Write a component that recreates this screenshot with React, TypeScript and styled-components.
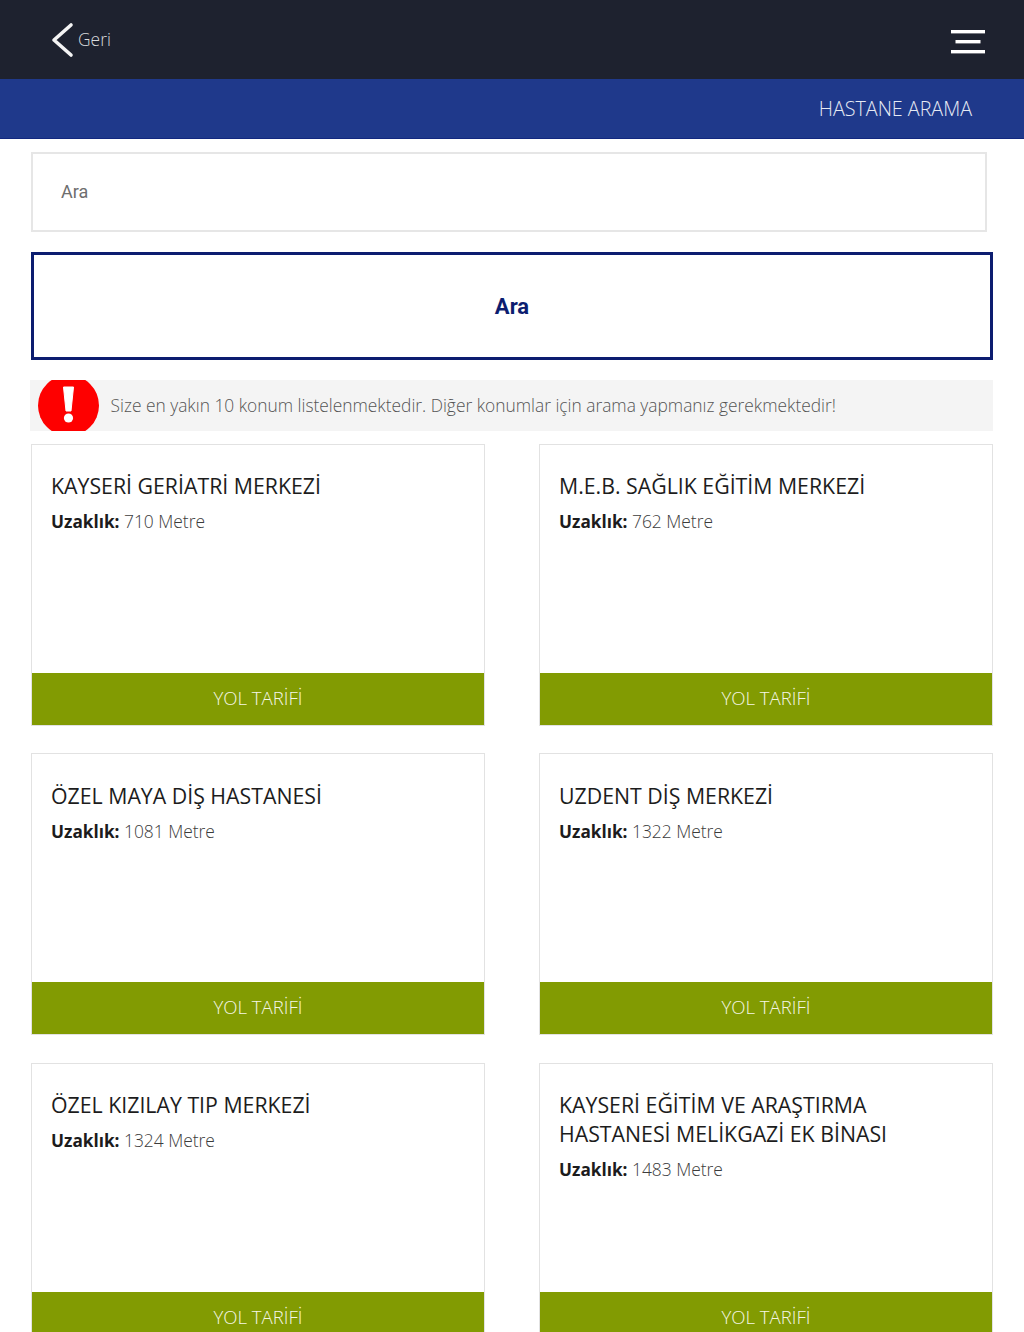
import { FC } from 'react'
import styled, { createGlobalStyle } from 'styled-components'

const Global = createGlobalStyle`
html, body { margin: 0; padding: 0; background: #fff; height: 1332px; overflow: hidden; }
* { box-sizing: border-box; }
body { font-family: 'Open Sans', sans-serif; }
`

const TopBar = styled.header`
  height: 79px;
  background: #1e222f;
  display: flex;
  align-items: center;
  justify-content: space-between;
  padding: 0 39px 0 50px;
`
const BackLink = styled.a`
  display: flex;
  align-items: center;
  gap: 4px;
  color: #d8dadd;
  font-size: 17.4px;
  font-weight: 300;
  padding-bottom: 2px;
  svg { display: block; margin-top: 3px; }
`
const TitleBar = styled.div`
  height: 60px;
  background: #1f398b;
  border-bottom: 1px solid #12287f;
  display: flex;
  align-items: center;
  justify-content: flex-end;
  padding: 0 52px 1px 0;
  color: #e6eaf4;
  font-size: 19.7px;
  font-weight: 300;
`
const Content = styled.main`
  padding: 13px 31px 0;
`
const SearchInput = styled.input`
  display: block;
  width: 956px;
  height: 80px;
  border: 2px solid #e6e6e6;
  padding: 0 28px 2px;
  font-family: Roboto, sans-serif;
  font-size: 18px;
  font-weight: 400;
  color: #555;
  outline: none;
  &::placeholder { color: #6e6e6e; opacity: 1; }
`
const SearchButton = styled.button`
  display: block;
  width: 962px;
  height: 108px;
  margin-top: 20px;
  background: #fff;
  border: 3px solid #0c1d70;
  font-family: Roboto, sans-serif;
  font-size: 22px;
  font-weight: 700;
  color: #0c1d70;
  padding: 0;
`
const Notice = styled.div`
  width: 963px;
  height: 51px;
  margin: 20px 0 13px -1px;
  background: #f4f4f4;
  display: flex;
  align-items: center;
  gap: 12px;
  padding-left: 7.5px;
  overflow: hidden;
  color: #555;
  font-size: 17.35px;
  font-weight: 300;
  white-space: nowrap;
  svg { flex: none; display: block; }
`
const NoticeText = styled.span`
  margin-top: -2px;
`
const CardGrid = styled.div`
  display: grid;
  grid-template-columns: 454px 454px;
  column-gap: 54px;
  row-gap: 27.4px;
`
const Card = styled.article`
  height: 282px;
  border: 1px solid #e2e2e2;
  display: flex;
  flex-direction: column;
`
const CardBody = styled.div`
  flex: 1;
  padding: 26.4px 19px 0;
`
const CardTitle = styled.h3`
  margin: 0;
  font-size: 21.3px;
  line-height: 29px;
  font-weight: 400;
  color: #1c1c1c;
`
const Distance = styled.p`
  margin: 10px 0 0;
  font-size: 17.4px;
  line-height: 23px;
  font-weight: 300;
  color: #3c3c3c;
  b { font-weight: 700; font-size: 17.2px; color: #1c1c1c; }
`
const RouteButton = styled.a`
  height: 52px;
  flex: none;
  background: #829b02;
  color: #f5f7e6;
  display: flex;
  align-items: center;
  justify-content: center;
  padding-bottom: 3px;
  font-size: 18.6px;
  font-weight: 300;
`

const BackIcon: FC = () => (
  <svg width="24" height="36" viewBox="0 0 24 36" fill="none">
    <path d="M21 3 L4 18 L21 33" stroke="#f4f4f4" strokeWidth="3.6" strokeLinecap="round" strokeLinejoin="round" />
  </svg>
)

const MenuIcon: FC = () => (
  <svg width="34" height="26" viewBox="0 0 34 26" style={{ marginTop: 5 }}>
    <rect x="0" y="1" width="34" height="3.4" fill="#fff" />
    <rect x="4.5" y="11" width="25" height="3.4" fill="#fff" />
    <rect x="0" y="21" width="34" height="3.4" fill="#fff" />
  </svg>
)

const AlertIcon: FC = () => (
  <svg width="61" height="61" viewBox="0 0 61 61">
    <circle cx="30.5" cy="30.5" r="30.5" fill="#fe0000" />
    <path d="M25.5 12 H35.5 L33 36 H28 Z" fill="#fff" stroke="#fff" strokeWidth="1" strokeLinejoin="round" />
    <circle cx="30.5" cy="43" r="4.6" fill="#fff" />
  </svg>
)

const hospitals = [
  { name: 'KAYSERİ GERİATRİ MERKEZİ', distance: '710 Metre' },
  { name: 'M.E.B. SAĞLIK EĞİTİM MERKEZİ', distance: '762 Metre' },
  { name: 'ÖZEL MAYA DİŞ HASTANESİ', distance: '1081 Metre' },
  { name: 'UZDENT DİŞ MERKEZİ', distance: '1322 Metre' },
  { name: 'ÖZEL KIZILAY TIP MERKEZİ', distance: '1324 Metre' },
  { name: 'KAYSERİ EĞİTİM VE ARAŞTIRMA HASTANESİ MELİKGAZİ EK BİNASI', distance: '1483 Metre' },
]

export default function App() {
  return (
    <>
      <Global />
      <TopBar>
        <BackLink>
          <BackIcon />
          Geri
        </BackLink>
        <MenuIcon />
      </TopBar>
      <TitleBar>HASTANE ARAMA</TitleBar>
      <Content>
        <SearchInput placeholder="Ara" />
        <SearchButton>Ara</SearchButton>
        <Notice>
          <AlertIcon />
          <NoticeText>Size en yakın 10 konum listelenmektedir. Diğer konumlar için arama yapmanız gerekmektedir!</NoticeText>
        </Notice>
        <CardGrid>
          {hospitals.map((h) => (
            <Card key={h.name}>
              <CardBody>
                <CardTitle>{h.name}</CardTitle>
                <Distance>
                  <b>Uzaklık:</b> {h.distance}
                </Distance>
              </CardBody>
              <RouteButton>YOL TARİFİ</RouteButton>
            </Card>
          ))}
        </CardGrid>
      </Content>
    </>
  )
}
